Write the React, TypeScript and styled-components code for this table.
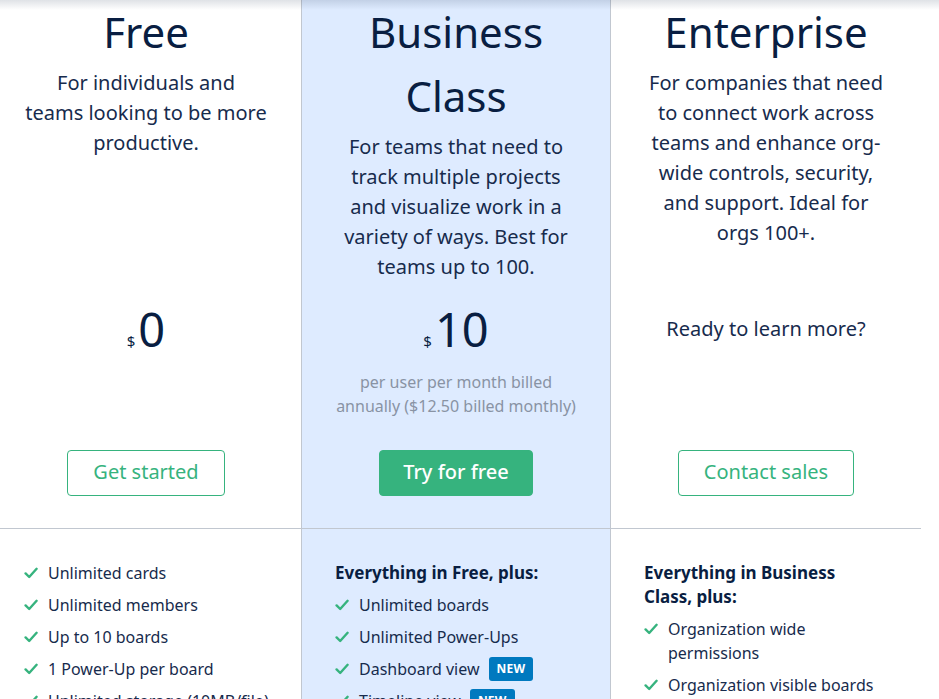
import React from "react";
import styled, { createGlobalStyle } from "styled-components";

const GlobalStyle = createGlobalStyle`
  html, body { margin: 0; padding: 0; background: #ffffff; }
  body {
    font-family: "Noto Sans", "Open Sans", sans-serif;
    color: #172b4d;
    overflow: hidden;
  }
  * { box-sizing: border-box; }
`;

const Page = styled.div`
  position: relative;
  width: 939px;
  height: 699px;
  overflow: hidden;
`;

const TopShadow = styled.div`
  position: absolute;
  top: 0;
  left: 0;
  right: 0;
  height: 10px;
  background: linear-gradient(to bottom, rgba(9, 30, 66, 0.13), rgba(9, 30, 66, 0));
  pointer-events: none;
  z-index: 2;
`;

const Table = styled.div`
  display: grid;
  grid-template-columns: repeat(3, 310px);
  margin-left: -9px;
  width: 930px;
`;

const Cell = styled.div<{ $hl?: boolean }>`
  background: ${(p) => (p.$hl ? "#deebff" : "#ffffff")};
  border-left: ${(p) => (p.$hl ? "1px solid #c1c7d0" : "none")};
  border-right: ${(p) => (p.$hl ? "1px solid #c1c7d0" : "none")};
  text-align: center;
`;

const HeaderCell = styled(Cell)`
  padding: 0 33px 19px;
  display: flex;
  flex-direction: column;
  align-items: center;
`;

const Title = styled.h2`
  margin: 0 0 4px;
  font-size: 42px;
  line-height: 64px;
  font-weight: 400;
  color: #091e42;
`;

const Desc = styled.p`
  margin: 0;
  max-width: 244px;
  font-size: 20px;
  line-height: 30px;
  color: #172b4d;
  white-space: pre-line;
`;

const PriceCell = styled(Cell)`
  height: 56px;
  display: flex;
  align-items: center;
  justify-content: center;
`;

const Price = styled.div`
  display: flex;
  align-items: baseline;
  gap: 3px;
  color: #091e42;
`;

const Currency = styled.span`
  font-size: 15px;
  line-height: 1;
`;

const Amount = styled.span`
  font-size: 47px;
  line-height: 56px;
`;

const Ready = styled.span`
  font-size: 20px;
  line-height: 28px;
  color: #172b4d;
`;

const NoteCell = styled(Cell)`
  padding: 13px 34px 0;
  min-height: 61px;
`;

const Note = styled.p`
  margin: 0;
  font-size: 16px;
  line-height: 24px;
  color: #8993a4;
`;

const ButtonCell = styled(Cell)`
  padding: 32px 0 32px;
  border-bottom: 1px solid #c1c7d0;
  display: flex;
  justify-content: center;
`;

const Button = styled.button<{ $primary?: boolean }>`
  height: 46px;
  padding: 0 ${(p) => (p.$primary ? 23 : 25)}px 3px;
  font-family: inherit;
  font-size: 20px;
  line-height: 1;
  font-weight: ${(p) => (p.$primary ? 500 : 400)};
  border-radius: 4px;
  border: 1px solid #36b37e;
  background: ${(p) => (p.$primary ? "#36b37e" : "transparent")};
  color: ${(p) => (p.$primary ? "#ffffff" : "#36b37e")};
  cursor: pointer;
`;

const FeatureCell = styled(Cell)`
  padding: 32px 28px 40px 33px;
  text-align: left;
  display: flex;
  flex-direction: column;
  gap: 8px;
`;

const FeatureHeading = styled.h3`
  margin: 0;
  font-size: 17px;
  line-height: 24px;
  font-weight: 700;
  color: #091e42;
  padding-right: 20px;
`;

const FeatureList = styled.ul`
  list-style: none;
  margin: 0;
  padding: 0;
  display: flex;
  flex-direction: column;
  gap: 8px;
`;

const Feature = styled.li`
  display: flex;
  align-items: flex-start;
  gap: 10px;
  font-size: 16px;
  line-height: 24px;
  color: #172b4d;
`;

const CheckWrap = styled.span`
  flex: 0 0 14px;
  height: 24px;
  display: flex;
  align-items: center;
`;

const FeatureText = styled.span`
  display: flex;
  align-items: center;
  flex-wrap: wrap;
`;

const Badge = styled.span`
  display: inline-flex;
  align-items: center;
  justify-content: center;
  margin-left: 9px;
  height: 24px;
  padding: 0 8px;
  border-radius: 3px;
  background: #0079bf;
  color: #ffffff;
  font-size: 12px;
  font-weight: 700;
  letter-spacing: 0.2px;
`;

const Check = () => (
  <svg width="14" height="12" viewBox="0 0 14 12" fill="none">
    <path d="M1.6 6.4 L5.2 10 L12.6 1.8" stroke="#36b37e" strokeWidth="2.4" strokeLinecap="round" strokeLinejoin="round" />
  </svg>
);

type Item = { text: string; badge?: boolean };

const plans = [
  {
    title: ["Free"],
    desc: "For individuals and\nteams looking to be more productive.",
    price: "0",
    note: "",
    button: "Get started",
    primary: false,
    heading: "",
    items: [
      { text: "Unlimited cards" },
      { text: "Unlimited members" },
      { text: "Up to 10 boards" },
      { text: "1 Power-Up per board" },
      { text: "Unlimited storage (10MB/file)" },
    ] as Item[],
  },
  {
    title: ["Business", "Class"],
    desc: "For teams that need to track multiple projects and visualize work in a variety of ways. Best for teams up to 100.",
    price: "10",
    note: "per user per month billed annually ($12.50 billed monthly)",
    button: "Try for free",
    primary: true,
    heading: "Everything in Free, plus:",
    items: [
      { text: "Unlimited boards" },
      { text: "Unlimited Power-Ups" },
      { text: "Dashboard view", badge: true },
      { text: "Timeline view", badge: true },
    ] as Item[],
  },
  {
    title: ["Enterprise"],
    desc: "For companies that need to connect work across teams and enhance org-wide controls, security, and support. Ideal for orgs 100+.",
    price: "",
    note: "",
    button: "Contact sales",
    primary: false,
    heading: "Everything in Business Class, plus:",
    items: [
      { text: "Organization wide permissions" },
      { text: "Organization visible boards" },
      { text: "Public board management" },
    ] as Item[],
  },
];

export default function App() {
  return (
    <Page>
      <GlobalStyle />
      <TopShadow />
      <Table>
        {plans.map((p, i) => (
          <HeaderCell key={`h${i}`} $hl={i === 1}>
            <Title>
              {p.title.map((t, j) => (
                <React.Fragment key={j}>
                  {j > 0 && <br />}
                  {t}
                </React.Fragment>
              ))}
            </Title>
            <Desc>{p.desc}</Desc>
          </HeaderCell>
        ))}
        {plans.map((p, i) => (
          <PriceCell key={`p${i}`} $hl={i === 1}>
            {p.price ? (
              <Price>
                <Currency>$</Currency>
                <Amount>{p.price}</Amount>
              </Price>
            ) : (
              <Ready>Ready to learn more?</Ready>
            )}
          </PriceCell>
        ))}
        {plans.map((p, i) => (
          <NoteCell key={`n${i}`} $hl={i === 1}>
            {p.note && <Note>{p.note}</Note>}
          </NoteCell>
        ))}
        {plans.map((p, i) => (
          <ButtonCell key={`b${i}`} $hl={i === 1}>
            <Button $primary={p.primary}>{p.button}</Button>
          </ButtonCell>
        ))}
        {plans.map((p, i) => (
          <FeatureCell key={`f${i}`} $hl={i === 1}>
            {p.heading && <FeatureHeading>{p.heading}</FeatureHeading>}
            <FeatureList>
              {p.items.map((it, k) => (
                <Feature key={k}>
                  <CheckWrap>
                    <Check />
                  </CheckWrap>
                  <FeatureText>
                    {it.text}
                    {it.badge && <Badge>NEW</Badge>}
                  </FeatureText>
                </Feature>
              ))}
            </FeatureList>
          </FeatureCell>
        ))}
      </Table>
    </Page>
  );
}
